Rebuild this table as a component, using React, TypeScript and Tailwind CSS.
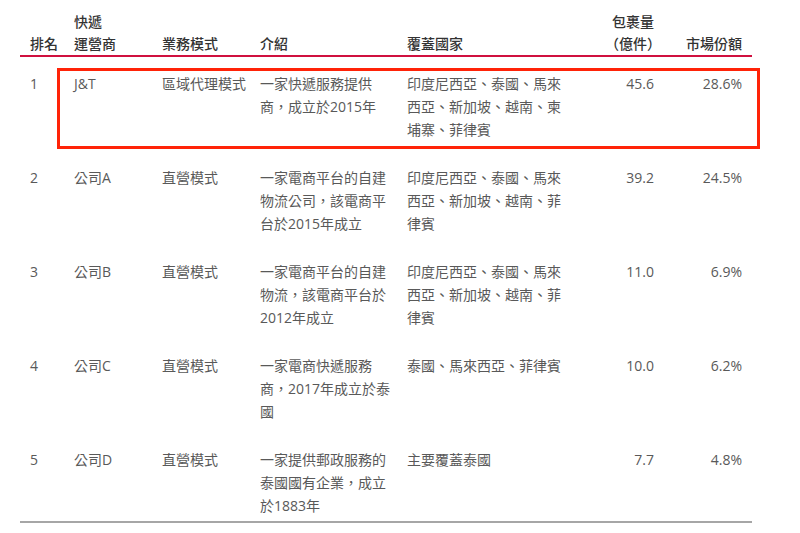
import React from "react";

interface Row {
    rank: string;
    name: string;
    mode: string;
    intro: string[];
    countries: string[];
    volume: string;
    share: string;
}

const rows: Row[] = [
    {
        rank: "1",
        name: "J&T",
        mode: "區域代理模式",
        intro: ["一家快遞服務提供", "商，成立於2015年"],
        countries: ["印度尼西亞、泰國、馬來", "西亞、新加坡、越南、柬", "埔寨、菲律賓"],
        volume: "45.6",
        share: "28.6%",
    },
    {
        rank: "2",
        name: "公司A",
        mode: "直營模式",
        intro: ["一家電商平台的自建", "物流公司，該電商平", "台於2015年成立"],
        countries: ["印度尼西亞、泰國、馬來", "西亞、新加坡、越南、菲", "律賓"],
        volume: "39.2",
        share: "24.5%",
    },
    {
        rank: "3",
        name: "公司B",
        mode: "直營模式",
        intro: ["一家電商平台的自建", "物流，該電商平台於", "2012年成立"],
        countries: ["印度尼西亞、泰國、馬來", "西亞、新加坡、越南、菲", "律賓"],
        volume: "11.0",
        share: "6.9%",
    },
    {
        rank: "4",
        name: "公司C",
        mode: "直營模式",
        intro: ["一家電商快遞服務", "商，2017年成立於泰", "國"],
        countries: ["泰國、馬來西亞、菲律賓"],
        volume: "10.0",
        share: "6.2%",
    },
    {
        rank: "5",
        name: "公司D",
        mode: "直營模式",
        intro: ["一家提供郵政服務的", "泰國國有企業，成立", "於1883年"],
        countries: ["主要覆蓋泰國"],
        volume: "7.7",
        share: "4.8%",
    },
];

const cols = "grid grid-cols-[44px_88px_98px_147px_193px_54px_88px]";

function Lines({ lines }: { lines: string[] }) {
    return (
        <div className="flex flex-col">
            {lines.map((l, i) => (
                <span key={i} className="whitespace-nowrap">{l}</span>
            ))}
        </div>
    );
}

export default function App() {
    return (
        <div
            className="relative w-[800px] h-[533px] bg-white overflow-hidden"
            style={{ fontFamily: '"Open Sans", "Noto Sans CJK TC", sans-serif' }}
        >
            <div className="ml-[20px] w-[732px]">
                {/* header */}
                <div className={`${cols} px-[10px] pt-[11px] text-[14px] leading-[22px] font-medium text-[#333333] border-b-2 border-[#d0103f]`}>
                    <div className="self-end">排名</div>
                    <div className="flex flex-col">
                        <span>快遞</span>
                        <span>運營商</span>
                    </div>
                    <div className="self-end">業務模式</div>
                    <div className="self-end">介紹</div>
                    <div className="self-end">覆蓋國家</div>
                    <div className="flex flex-col items-end whitespace-nowrap">
                        <span>包裹量</span>
                        <span className="mr-[-7px]">（億件）</span>
                    </div>
                    <div className="self-end text-right">市場份額</div>
                </div>

                {/* body */}
                <div className="flex flex-col gap-[25px] pt-[15px] pb-[4px] text-[14px] leading-[23px] text-[#595959] border-b-2 border-[#a6a6a6]">
                    {rows.map((r) => (
                        <div key={r.rank} className={`${cols} px-[10px] h-[69px]`}>
                            <div>{r.rank}</div>
                            <div>{r.name}</div>
                            <div className="whitespace-nowrap">{r.mode}</div>
                            <Lines lines={r.intro} />
                            <Lines lines={r.countries} />
                            <div className="text-right">{r.volume}</div>
                            <div className="text-right">{r.share}</div>
                        </div>
                    ))}
                </div>
            </div>

            {/* highlight box */}
            <div className="absolute left-[57px] top-[68px] w-[703px] h-[81px] border-[3px] border-[#ff2308]" />
        </div>
    );
}
